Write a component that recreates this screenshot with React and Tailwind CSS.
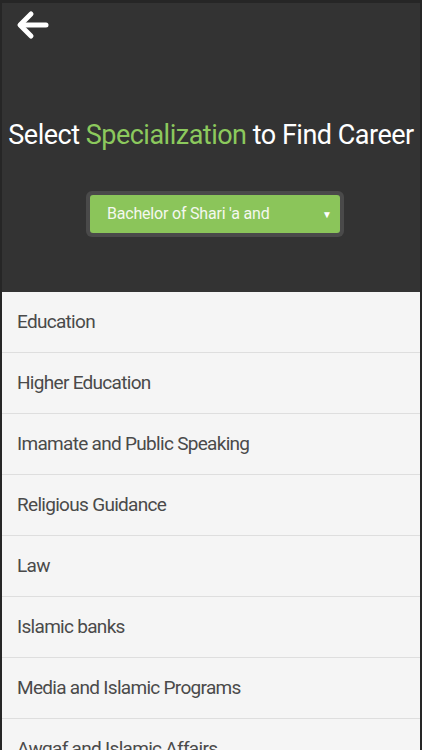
import React from 'react';

const careers = [
  'Education',
  'Higher Education',
  'Imamate and Public Speaking',
  'Religious Guidance',
  'Law',
  'Islamic banks',
  'Media and Islamic Programs',
  'Awqaf and Islamic Affairs',
];

export default function App() {
  return (
    <div
      className="w-[422px] h-[750px] overflow-hidden bg-[#262626] pt-[3px] px-[2px] pb-[3px] flex flex-col"
      style={{ fontFamily: 'Roboto, "Liberation Sans", sans-serif' }}
    >
      {/* Header */}
      <div className="h-[289px] shrink-0 bg-[#333333] flex flex-col">
        <div className="pl-[14px] pt-[6px] h-[40px]">
          <svg width="34" height="32" viewBox="0 0 34 32" fill="none" stroke="white" strokeWidth="5" strokeLinecap="round" strokeLinejoin="round">
            <path d="M30 16H6" />
            <path d="M15 5L4 16l11 11" />
          </svg>
        </div>
        <h1 className="mt-[76px] text-center whitespace-nowrap text-[27px] leading-[32px] text-white tracking-[-0.5px]">
          Select <span className="text-[#8cc95d]">Specialization</span> to Find Career
        </h1>
        <div className="mt-[40px] flex justify-center">
          <div className="w-[258px] h-[46px] rounded-[6px] bg-[#4a4a4a] p-[4px] ml-[8px]">
            <div className="h-full rounded-[3px] bg-[#8bc55a] flex items-center pl-[17px] pr-[8px]">
              <span className="flex-1 text-[16px] text-[#f4f8ef] tracking-[-0.2px]">Bachelor of Shari 'a and</span>
              <span className="text-[10px] text-white">▼</span>
            </div>
          </div>
        </div>
      </div>

      {/* List */}
      <div className="flex-1 bg-[#f5f5f5] flex flex-col">
        {careers.map((c) => (
          <div
            key={c}
            className="h-[61px] shrink-0 border-b border-[#dedede] flex items-center pl-[15px] text-[19px] tracking-[-0.7px] text-[#4a4a4a]"
          >
            {c}
          </div>
        ))}
      </div>
    </div>
  );
}
